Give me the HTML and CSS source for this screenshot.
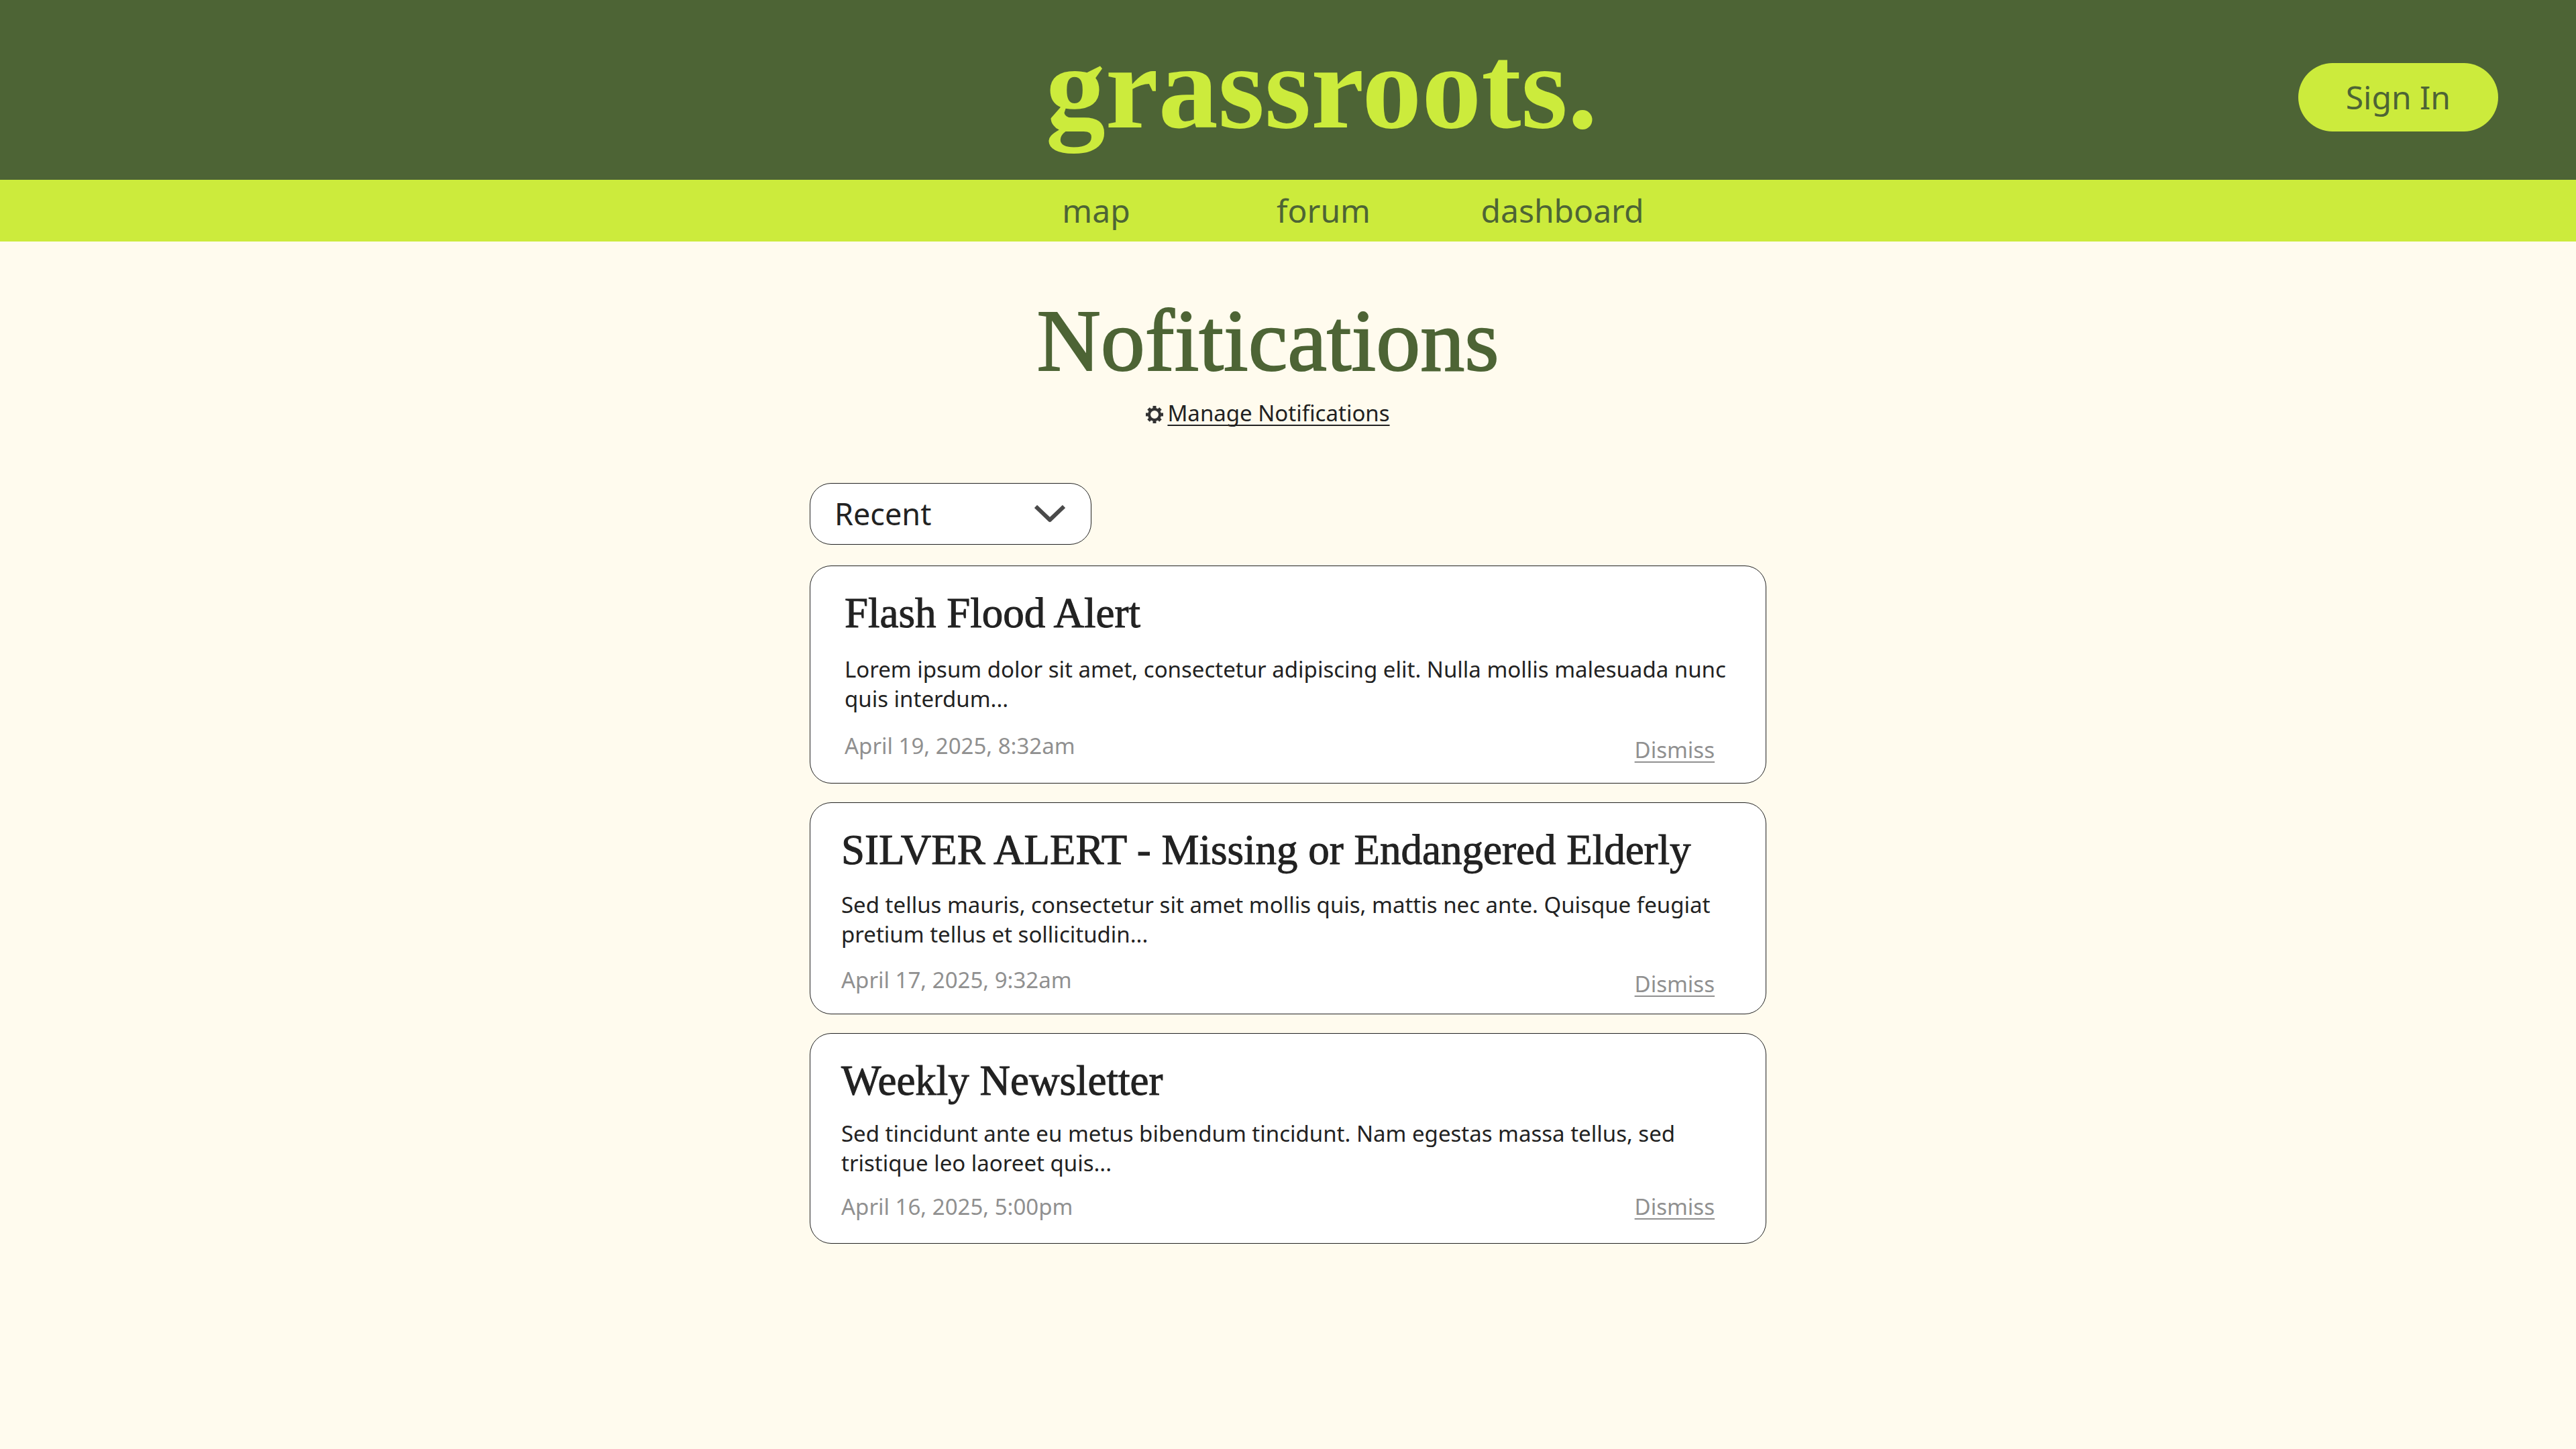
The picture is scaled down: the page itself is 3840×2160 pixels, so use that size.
FILE: index.html
```
<!DOCTYPE html>
<html lang="en">
<head>
<meta charset="utf-8">
<meta name="viewport" content="width=device-width, initial-scale=1">
<title>Notifications - grassroots.</title>
<link rel="stylesheet" href="styles.css">
</head>
<body>
<header class="site-header">
  <a class="logo" href="#">grassroots.</a>
  <button class="sign-in" type="button">Sign In</button>
</header>
<nav class="site-nav" aria-label="Main">
  <a class="site-nav-link" href="#map">map</a>
  <a class="site-nav-link" href="#forum">forum</a>
  <a class="site-nav-link" href="#dashboard">dashboard</a>
</nav>
<main class="page">
  <div class="intro">
    <h1 class="intro-title">Nofitications</h1>
    <a class="manage" href="#manage">
      <svg class="manage-icon" viewBox="0 0 26 26" aria-hidden="true">
        <circle cx="13" cy="13" r="8" fill="none" stroke="currentColor" stroke-width="4"/>
        <g stroke="currentColor" stroke-width="5">
          <path d="M13 0v5M13 21v5M0 13h5M21 13h5"/>
          <path d="M4 4l3 3M19 19l3 3M4 22l3-3M19 7l3-3"/>
        </g>
      </svg>
      <span class="manage-text">Manage Notifications</span>
    </a>
  </div>
  <div class="sort">
    <select class="sort-select" aria-label="Sort notifications">
      <option>Recent</option>
      <option>Oldest</option>
    </select>
    <svg class="sort-chevron" viewBox="0 0 46 26" aria-hidden="true"><path d="M2 2l21 20L44 2" fill="none" stroke="currentColor" stroke-width="6" stroke-linejoin="round"/></svg>
  </div>
  <div class="cards">
    <article class="card">
      <h2 class="card-title">Flash Flood Alert</h2>
      <p class="card-text">Lorem ipsum dolor sit amet, consectetur adipiscing elit. Nulla mollis malesuada nunc quis interdum...</p>
      <div class="card-footer">
        <time class="card-date" datetime="2025-04-19T08:32">April 19, 2025, 8:32am</time>
        <button class="dismiss" type="button">Dismiss</button>
      </div>
    </article>
    <article class="card card-silver">
      <h2 class="card-title">SILVER ALERT - Missing or Endangered Elderly</h2>
      <p class="card-text">Sed tellus mauris, consectetur sit amet mollis quis, mattis nec ante. Quisque feugiat pretium tellus et sollicitudin...</p>
      <div class="card-footer">
        <time class="card-date" datetime="2025-04-17T09:32">April 17, 2025, 9:32am</time>
        <button class="dismiss" type="button">Dismiss</button>
      </div>
    </article>
    <article class="card card-news">
      <h2 class="card-title">Weekly Newsletter</h2>
      <p class="card-text">Sed tincidunt ante eu metus bibendum tincidunt. Nam egestas massa tellus, sed tristique leo laoreet quis...</p>
      <div class="card-footer">
        <time class="card-date" datetime="2025-04-16T17:00">April 16, 2025, 5:00pm</time>
        <button class="dismiss" type="button">Dismiss</button>
      </div>
    </article>
  </div>
</main>
</body>
</html>
```
FILE: styles.css
```
:root {
  --green: #4d6435;
  --lime: #cceb3c;
  --cream: #fffbee;
  --ink: #222;
  --muted: #909090;
  --serif: "Liberation Serif", serif;
  --sans: "Noto Sans", sans-serif;
}

* { box-sizing: border-box; }

body {
  margin: 0;
  background: var(--cream);
  color: var(--ink);
  font: 400 33px/44px var(--sans);
}

h1, h2, p { margin: 0; }

button, select { font: inherit; color: inherit; cursor: pointer; }

.site-header {
  display: grid;
  grid-template-columns: 1fr auto 1fr;
  padding: 40px 116px 18px 216px;
  background: var(--green);
}

.logo {
  grid-column: 2;
  height: 210px;
  color: var(--lime);
  font: 700 178px/180px var(--serif);
  text-decoration: none;
}

.sign-in {
  grid-column: 3;
  justify-self: end;
  align-self: center;
  padding: 17px 71px;
  border: 0;
  border-radius: 51px;
  background: var(--lime);
  color: var(--green);
  font-size: 48px;
  line-height: 68px;
}

.site-nav {
  display: grid;
  grid-template-columns: 330px 348px 364px;
  justify-content: center;
  padding-left: 140px;
  background: var(--lime);
}

.site-nav-link {
  justify-self: center;
  color: var(--green);
  font-size: 48px;
  line-height: 92px;
  text-decoration: none;
}

.page { padding: 78px 32px; }

.intro {
  display: flex;
  flex-direction: column;
  align-items: center;
  gap: 16px;
  padding-right: 60px;
}

.intro-title {
  color: var(--green);
  font: 400 132px/140px var(--serif);
  -webkit-text-stroke: 2px currentColor;
}

.manage {
  display: flex;
  align-items: center;
  gap: 6px;
  color: inherit;
  text-decoration: none;
}

.manage-icon {
  width: 26px;
  height: 26px;
  margin-top: 4px;
  color: #333;
}

.manage-text,
.dismiss {
  text-decoration: underline;
  text-decoration-thickness: 2px;
  text-decoration-skip-ink: none;
  text-underline-offset: 5px;
}

.sort,
.cards {
  max-width: 1426px;
  margin: 0 auto;
}

.sort {
  display: grid;
  grid-template-columns: 420px;
  align-items: center;
  margin-top: 82px;
}

.sort-select {
  grid-area: 1 / 1;
  height: 92px;
  padding: 0 36px;
  border: 1px solid var(--ink);
  border-radius: 32px;
  background: #fff;
  font-size: 45px;
  appearance: none;
}

.sort-chevron {
  grid-area: 1 / 1;
  justify-self: end;
  width: 46px;
  height: 26px;
  margin-right: 39px;
  color: #4a4a4a;
  pointer-events: none;
}

.cards {
  display: flex;
  flex-direction: column;
  gap: 28px;
  margin-top: 31px;
}

.card {
  display: flex;
  flex-direction: column;
  gap: 26px;
  padding: 34px 36px 27px 51px;
  border: 1px solid var(--ink);
  border-radius: 32px;
  background: #fff;
}

.card-silver {
  gap: 24px;
  padding: 34px 36px 22px 46px;
}

.card-news {
  gap: 21px;
  padding: 34px 36px 32px 46px;
}

.card-title {
  font: 400 63px/72px var(--serif);
  -webkit-text-stroke: 1px currentColor;
}

.card-footer {
  display: flex;
  justify-content: space-between;
  min-height: 50px;
  padding-right: 40px;
  color: var(--muted);
}

.card-news .card-footer { min-height: 44px; }

.dismiss {
  align-self: flex-end;
  padding: 0;
  border: 0;
  background: none;
}
```
